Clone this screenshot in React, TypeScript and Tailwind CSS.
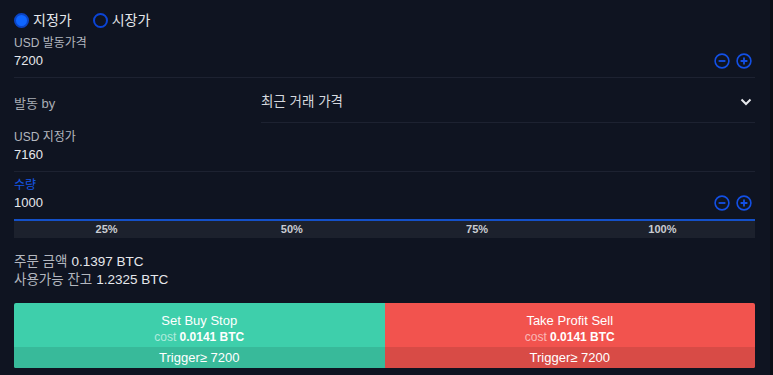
import React from "react";

const font = { fontFamily: '"Liberation Sans", "Noto Sans CJK KR", sans-serif' };

function Stepper() {
  return (
    <div className="flex items-center gap-[6px] mr-[3px]">
      <svg width="16" height="16" viewBox="0 0 16 16" fill="none" stroke="#1350e6" strokeWidth="1.6">
        <circle cx="8" cy="8" r="6.9" />
        <path d="M4.6 8h6.8" strokeWidth="1.8" />
      </svg>
      <svg width="16" height="16" viewBox="0 0 16 16" fill="none" stroke="#1350e6" strokeWidth="1.6">
        <circle cx="8" cy="8" r="6.9" />
        <path d="M4.6 8h6.8M8 4.6v6.8" strokeWidth="1.8" />
      </svg>
    </div>
  );
}

function Field({ label, value, blue, stepper }: { label: string; value: string; blue?: boolean; stepper?: boolean }) {
  return (
    <>
      <div className={`h-[16px] flex items-center text-[12px] ${blue ? "text-[#1557e6]" : "text-[#b3b7bf]"}`}>{label}</div>
      <div className="h-[20px] flex items-center justify-between">
        <span className="text-[13px] text-[#e6e8ec]">{value}</span>
        {stepper && <Stepper />}
      </div>
    </>
  );
}

function ActionButton({ title, bg, bottom }: { title: string; bg: string; bottom: string }) {
  return (
    <div className={`flex-1 flex flex-col ${bg}`}>
      <div className="h-[44px] flex flex-col items-center pt-[10px]">
        <div className="h-[16px] leading-[16px] text-[13px] text-white">{title}</div>
        <div className="h-[17px] leading-[17px] text-[12px]">
          <span className="text-white/60">cost </span>
          <span className="text-white font-bold">0.0141 BTC</span>
        </div>
      </div>
      <div className={`h-[21px] flex items-center justify-center text-[13px] text-white ${bottom}`}>Trigger≥ 7200</div>
    </div>
  );
}

export default function App() {
  return (
    <div className="w-[773px] h-[375px] flex bg-[#0f1421] overflow-hidden" style={font}>
      <div className="flex-1 flex flex-col pl-[14px] pr-[15px]">
        <div className="mt-[11px] h-[18px] flex items-center text-[14px] text-[#e6e8ec]">
          <span className="w-[15px] h-[15px] rounded-full bg-[#0f66ff] border-2 border-[#0b44c4]" />
          <span className="ml-[4px]">지정가</span>
          <span className="ml-[21px] w-[15px] h-[15px] rounded-full border-2 border-[#0b44d6]" />
          <span className="ml-[4px]">시장가</span>
        </div>

        <div className="mt-[6px]">
          <Field label="USD 발동가격" value="7200" stepper />
        </div>
        <div className="mt-[6px] border-b border-[#1d2231]" />

        <div className="flex h-[45px]">
          <div className="w-[247px] flex items-center pt-[6px] text-[13px] text-[#a9adb5]">발동 by</div>
          <div className="flex-1 flex items-center justify-between pt-[4px] border-b border-[#1d2231]">
            <span className="text-[13.5px] text-[#d5d8de]">최근 거래 가격</span>
            <svg width="12" height="8" viewBox="0 0 12 8" fill="none" stroke="#e6e8ec" strokeWidth="2" className="mr-[3px]">
              <path d="M1.5 1.5 6 6l4.5-4.5" />
            </svg>
          </div>
        </div>

        <div className="mt-[6px]">
          <Field label="USD 지정가" value="7160" />
        </div>
        <div className="mt-[6px] border-b border-[#1d2231]" />

        <div className="mt-[5px]">
          <Field label="수량" value="1000" blue stepper />
        </div>
        <div className="mt-[6px] h-[2px] bg-[#1450c8]" />
        <div className="h-[17px] grid grid-cols-4 bg-[#1c212d] text-[11px] font-semibold text-[#c9ccd2]">
          <div className="flex items-center justify-center">25%</div>
          <div className="flex items-center justify-center">50%</div>
          <div className="flex items-center justify-center">75%</div>
          <div className="flex items-center justify-center">100%</div>
        </div>

        <div className="mt-[15px] h-[18px] flex items-center text-[13.5px]">
          <span className="text-[#b3b7bf]">주문 금액</span>
          <span className="ml-[4px] text-[#e6e8ec]">0.1397 BTC</span>
        </div>
        <div className="h-[18px] flex items-center text-[13.5px]">
          <span className="text-[#b3b7bf]">사용가능 잔고</span>
          <span className="ml-[4px] text-[#e6e8ec]">1.2325 BTC</span>
        </div>

        <div className="mt-[14px] h-[65px] flex rounded-[2px] overflow-hidden">
          <ActionButton title="Set Buy Stop" bg="bg-[#3ecfab]" bottom="bg-[#38ba9a]" />
          <ActionButton title="Take Profit Sell" bg="bg-[#f2534e]" bottom="bg-[#d84b46]" />
        </div>
      </div>
      <div className="w-[3px] bg-[#0a0d15]" />
    </div>
  );
}
